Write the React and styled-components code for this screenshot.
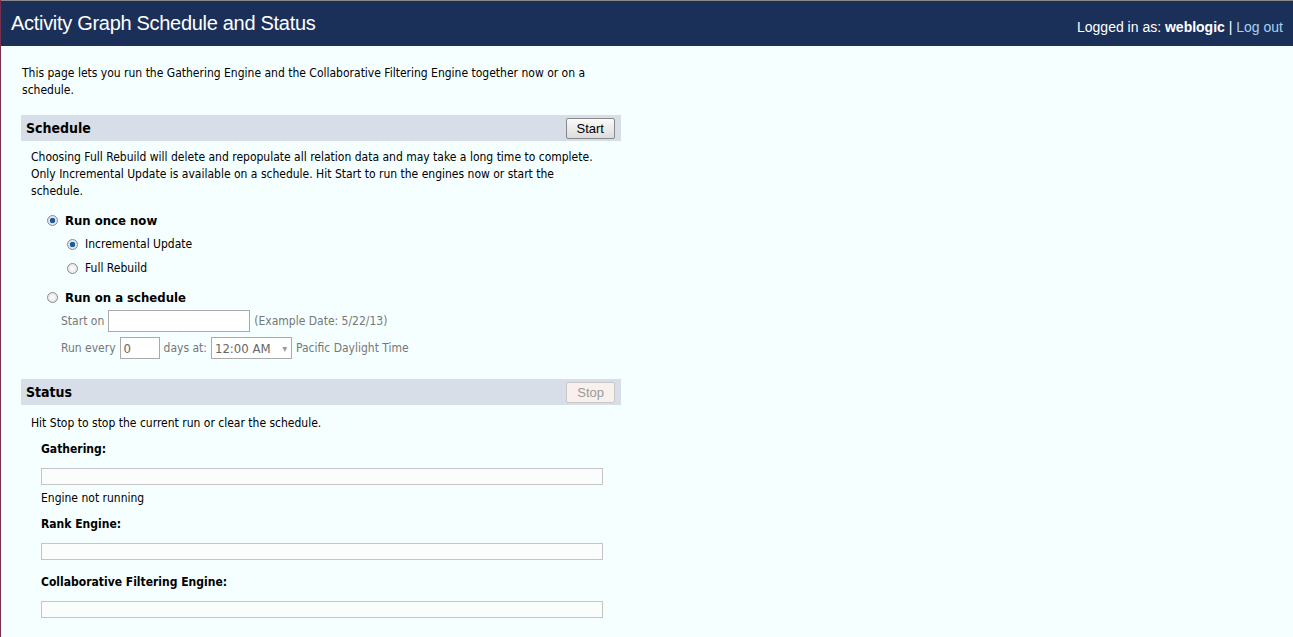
import React from "react";
import styled, { createGlobalStyle } from "styled-components";

const Global = createGlobalStyle`
  html, body { margin: 0; padding: 0; background: #f5ffff; }
  body { font-family: Tahoma, "DejaVu Sans Condensed", "Liberation Sans", sans-serif; font-size: 12px; line-height: 17px; color: #000; }
`;
const Page = styled.div`min-height: 637px; border-left: 1px solid #7a3050; box-sizing: border-box;`;
const Header = styled.div`
  height: 46px; background: #1b3058; border-top: 1px solid #888; box-sizing: border-box;
  display: flex; align-items: center; justify-content: space-between; padding: 0 10px 0 10px; color: #fff;
`;
const Title = styled.h1`margin: 0; font: 20px "Liberation Sans", sans-serif; letter-spacing: -0.3px;`;
const User = styled.div`font: 14px "Liberation Sans", sans-serif; padding-top: 6px; b{font-weight:bold;} a{color:#a6d4f2; text-decoration:none;}`;
const Main = styled.div`padding: 19px 0 0 20px; width: 600px;`;
const Text = styled.p`margin: 0; line-height: 17px; padding-left: ${p => p.$indent || 0}px; max-width: ${p => p.$w ? p.$w + "px" : "none"};`;
const SectionHead = styled.div`
  margin-top: ${p => p.$mt}px; height: 26px; background: #d8dee8; display: flex; align-items: center;
  justify-content: space-between; padding: 0 6px 0 5px;
`;
const SectionTitle = styled.span`font-weight: bold; font-size: 14px;`;
const Btn = styled.button`
  font: 13px "Liberation Sans", sans-serif; height: 21px; padding: 0 10px; border: 1px solid ${p => p.$disabled ? "#c8c8c8" : "#888"};
  border-radius: 2px; background: ${p => p.$disabled ? "#f8f0ec" : "linear-gradient(#fafafa,#dcdcdc)"}; color: ${p => p.$disabled ? "#999" : "#000"};
`;
const Body = styled.div`padding: ${p => p.$pt}px 10px 0 10px;`;
const RadioRow = styled.label`
  display: flex; align-items: center; gap: 7px; margin-left: ${p => p.$indent}px; height: 18px; margin-top: ${p => p.$mt}px;
  font-weight: ${p => p.$bold ? "bold" : "normal"}; font-size: ${p => p.$bold ? 13 : 12}px;
`;
const Radio = styled.span`
  width: 11px; height: 11px; border-radius: 50%; border: 1px solid #8a8a8a; box-sizing: border-box;
  background: ${p => p.$on ? "radial-gradient(circle, #1b5c9c 0 2.5px, #d9e6f2 3px)" : "radial-gradient(circle,#fff,#ddd)"};
`;
const FormRow = styled.div`display: flex; align-items: center; gap: 4px; margin-left: 30px; margin-top: ${p => p.$mt}px; color: #777;`;
const Input = styled.div`width: ${p => p.$w}px; height: 22px; border: 1px solid #aaa; background: #fff; color: #666; display:flex; align-items:center; padding-left:3px; box-sizing:border-box; font-size:13px;`;
const Select = styled(Input)`justify-content: space-between; padding-right: 4px; &::after{content:"▾"; font-size:10px; color:#999;}`;
const Label = styled.div`font-weight: bold; line-height: 17px; margin: ${p => p.$mt}px 0 0 10px;`;
const Bar = styled.div`margin: 10px 0 0 10px; height: 17px; width: 562px; border: 1px solid #c4c4c4; background: #fbfdfd; box-sizing: border-box;`;

export default function App() {
  return (
    <Page>
      <Global />
      <Header>
        <Title>Activity Graph Schedule and Status</Title>
        <User>Logged in as: <b>weblogic</b> | <a href="#">Log out</a></User>
      </Header>
      <Main>
        <Text $indent={1} $w={580}>This page lets you run the Gathering Engine and the Collaborative Filtering Engine together now or on a schedule.</Text>
        <SectionHead $mt={16}><SectionTitle>Schedule</SectionTitle><Btn>Start</Btn></SectionHead>
        <Body $pt={8}>
          <Text $w={572}>Choosing Full Rebuild will delete and repopulate all relation data and may take a long time to complete. Only Incremental Update is available on a schedule. Hit Start to run the engines now or start the schedule.</Text>
          <RadioRow $indent={16} $mt={11} $bold><Radio $on />Run once now</RadioRow>
          <RadioRow $indent={36} $mt={6}><Radio $on />Incremental Update</RadioRow>
          <RadioRow $indent={36} $mt={6}><Radio />Full Rebuild</RadioRow>
          <RadioRow $indent={16} $mt={11} $bold><Radio />Run on a schedule</RadioRow>
          <FormRow $mt={4}>Start on <Input $w={142} />(Example Date: 5/22/13)</FormRow>
          <FormRow $mt={5}>Run every <Input $w={40}>0</Input> days at: <Select $w={81}>12:00 AM</Select> Pacific Daylight Time</FormRow>
        </Body>
        <SectionHead $mt={20}><SectionTitle>Status</SectionTitle><Btn $disabled>Stop</Btn></SectionHead>
        <Body $pt={10}>
          <Text>Hit Stop to stop the current run or clear the schedule.</Text>
          <Label $mt={9}>Gathering:</Label>
          <Bar />
          <Text $indent={10} style={{ marginTop: 5 }}>Engine not running</Text>
          <Label $mt={9}>Rank Engine:</Label>
          <Bar />
          <Label $mt={14}>Collaborative Filtering Engine:</Label>
          <Bar />
        </Body>
      </Main>
    </Page>
  );
}
